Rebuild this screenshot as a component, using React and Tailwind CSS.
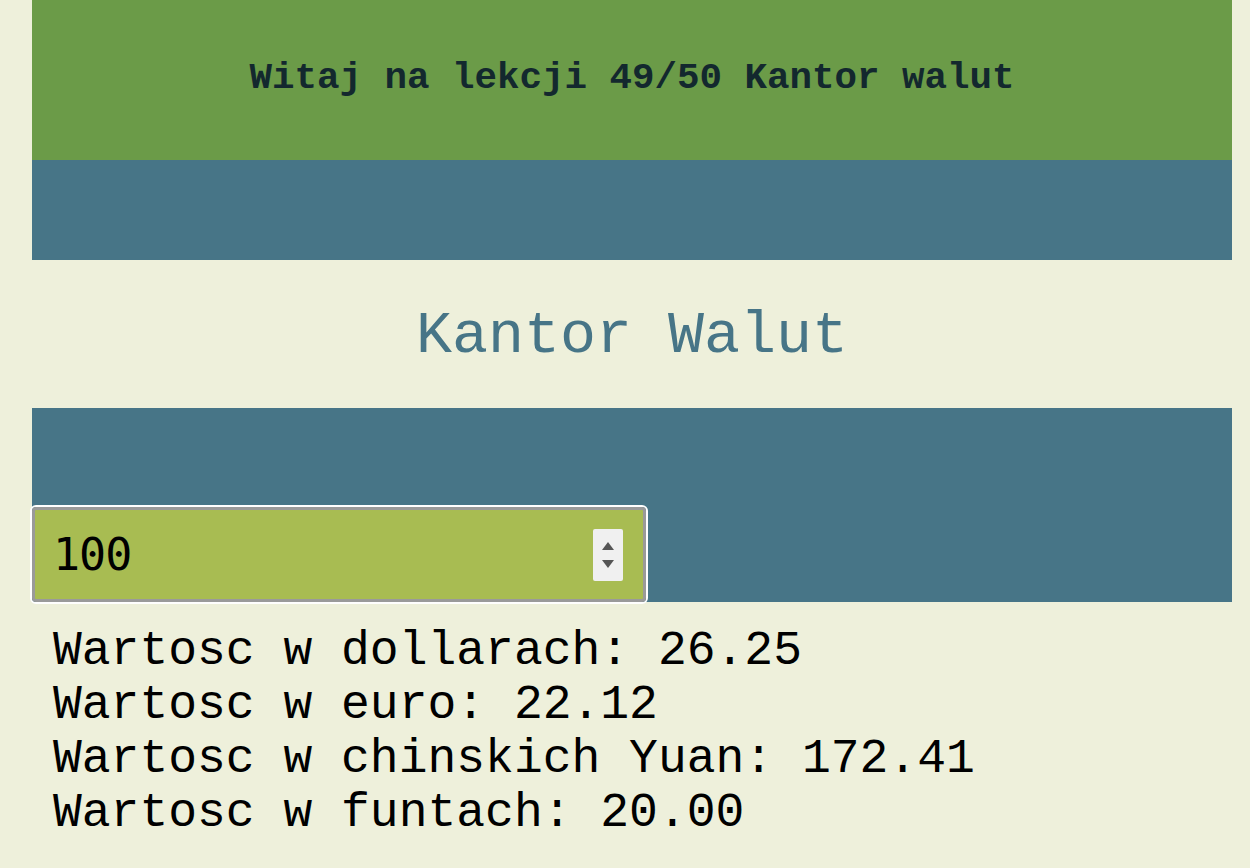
import { useState } from "react";

const rates = [
  { label: "dollarach", rate: 0.2625 },
  { label: "euro", rate: 0.2212 },
  { label: "chinskich Yuan", rate: 1.7241 },
  { label: "funtach", rate: 0.2 },
];

export default function App() {
  const [amount, setAmount] = useState("100");
  const value = parseFloat(amount) || 0;

  return (
    <div className="min-h-[868px] bg-[#eef0db] font-['Liberation_Mono',monospace]">
      <div className="mx-[32px] w-[1200px]">
        {/* header */}
        <div className="h-[160px] bg-[#6b9b48] flex items-center justify-center">
          <h1 className="text-[37.5px] font-bold text-[#13282e] -mt-[3px]">
            Witaj na lekcji 49/50 Kantor walut
          </h1>
        </div>
        <div className="h-[100px] bg-[#477587]"></div>

        {/* title */}
        <h2 className="h-[148px] flex items-center justify-center text-[60px] text-[#477587] pt-[4px]">
          Kantor Walut
        </h2>

        {/* input area */}
        <div className="h-[194px] bg-[#477587] flex items-end">
          <div className="-ml-[2px] -mb-[2px] w-[618px] h-[99px] rounded-[6px] border-2 border-white">
            <div className="h-full rounded-[4px] border-[3px] border-[#9a9a9a] bg-[#a8bc52] flex items-center pl-[18px] pr-[20px]">
              <input
                type="text"
                value={amount}
                onChange={(e) => setAmount(e.target.value)}
                className="w-0 min-w-0 flex-1 bg-transparent outline-none text-[45px] text-black font-['DejaVu_Sans_Mono',monospace] tracking-[-1px] font-light"
              />
              <div className="w-[30px] h-[52px] bg-[#f0f0f0] rounded-[2px] flex flex-col items-center justify-center gap-[10px] shrink-0">
                <svg width="12" height="8" viewBox="0 0 12 8">
                  <path d="M6 0 L12 8 L0 8 Z" fill="#555" />
                </svg>
                <svg width="12" height="8" viewBox="0 0 12 8">
                  <path d="M0 0 L12 0 L6 8 Z" fill="#555" />
                </svg>
              </div>
            </div>
          </div>
        </div>

        {/* results */}
        <div className="pl-[21px] pt-[22px] text-[48px] leading-[54px] text-black">
          {rates.map((r) => (
            <div key={r.label}>
              Wartosc w {r.label}: {(value * r.rate).toFixed(2)}
            </div>
          ))}
        </div>
      </div>
    </div>
  );
}
